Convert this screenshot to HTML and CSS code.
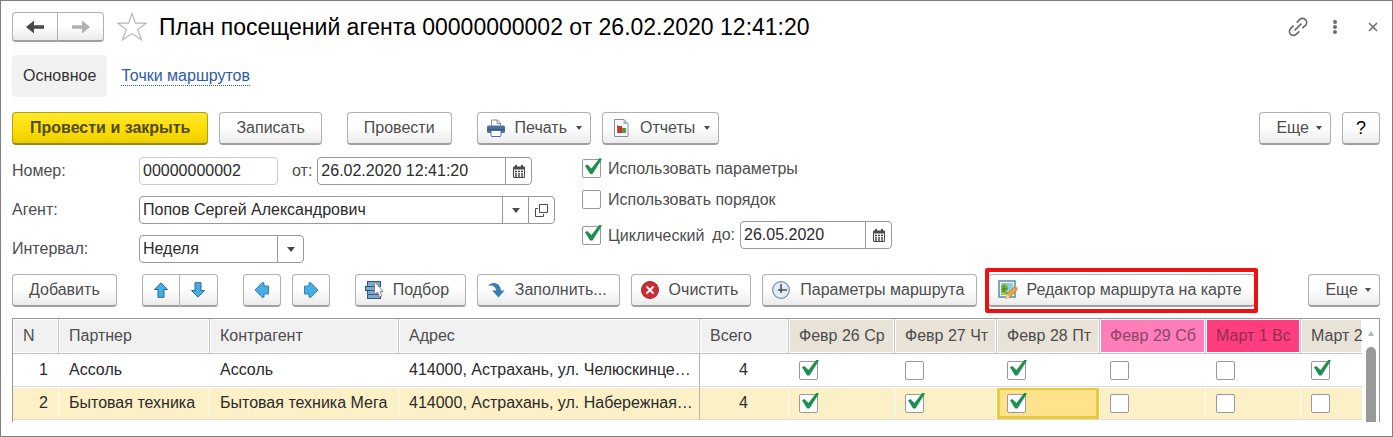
FILE: index.html
```
<!DOCTYPE html>
<html lang="ru">
<head>
  <meta charset="utf-8">
  <title>План посещений агента</title>
  <link rel="stylesheet" href="styles.css">
</head>
<body>
  <div class="window">
    <header class="header">
      <div class="btn-group nav">
        <button class="btn" aria-label="Назад">
          <svg width="18" height="14" viewBox="0 0 18 14"><path d="M0 7 L8 0.5 V5.3 H18 V8.700 H8 V13.5 Z" fill="#4a4a4a"/></svg>
        </button>
        <button class="btn" aria-label="Вперед">
          <svg width="18" height="14" viewBox="0 0 18 14"><path d="M18 7 L10 0.5 V5.3 H0 V8.700 H10 V13.5 Z" fill="#b0b0b0"/></svg>
        </button>
      </div>
      <button class="plain star" aria-label="В избранное">
        <svg width="30" height="30" viewBox="0 0 30 30"><path d="M15 1.5 L18.4 11.2 H29 L20.6 17.4 L24.6 28 L15 21.6 L5.4 28 L9.4 17.4 L1 11.2 H11.6 Z" fill="#fff" stroke="#b4b8bc" stroke-width="1.2"/></svg>
      </button>
      <h1>План посещений агента 00000000002 от 26.02.2020 12:41:20</h1>
      <div class="window-tools">
        <button class="plain" aria-label="Ссылка">
          <svg width="20" height="20" viewBox="0 0 20 20" fill="none" stroke="#6c6c6c" stroke-width="1.7"><path d="M8.8 5.6 L11.6 2.6 A4 4 0 0 1 17.4 8.4 L14.4 11.2 M11.2 14.4 L8.4 17.2 A4 4 0 0 1 2.6 11.6 L5.6 8.6 M6.6 13.4 L13.4 6.6"/></svg>
        </button>
        <button class="plain" aria-label="Меню">
          <svg width="6" height="14" viewBox="0 0 6 14" fill="#6c6c6c"><circle cx="3" cy="2" r="2"/><circle cx="3" cy="7" r="2"/><circle cx="3" cy="12" r="2"/></svg>
        </button>
        <button class="plain" aria-label="Закрыть">
          <svg width="10" height="10" viewBox="0 0 10 10" stroke="#6c6c6c" stroke-width="1.6"><path d="M1 1 L9 9 M9 1 L1 9"/></svg>
        </button>
      </div>
    </header>

    <nav class="tabs">
      <span class="tab-active">Основное</span>
      <a href="#">Точки маршрутов</a>
    </nav>

    <div class="toolbar">
      <button class="btn primary">Провести и закрыть</button>
      <button class="btn">Записать</button>
      <button class="btn apart">Провести</button>
      <button class="btn with-icon apart">
        <svg class="icon" width="18" height="18" viewBox="0 0 18 18"><path d="M4.5 8 V1 H10.5 L13.5 4 V8" fill="#fff" stroke="#7c8fa5"/><path d="M10 1 V4.5 H13.5" fill="none" stroke="#7c8fa5"/><rect y="6.500" width="18" height="7.500" rx="1.500" fill="#4d709c"/><path d="M0 10.500 H18" stroke="#2f4f78"/><rect x="4" y="11.500" width="10" height="6" rx="1" fill="#fff" stroke="#4d709c"/></svg>
        Печать
        <span class="caret"></span>
      </button>
      <button class="btn with-icon">
        <svg class="icon" width="18" height="18" viewBox="0 0 18 18"><path d="M2.500 0.500 H12 L16 4.500 V17.500 H2.500 Z" fill="#fff" stroke="#7f929c"/><path d="M11.500 0.500 V5 H16" fill="#a9b8c0"/><rect x="5" y="6" width="1" height="8" fill="#8b6e5a"/><rect x="6" y="7" width="4" height="7" fill="#d63232"/><rect x="10" y="9" width="4" height="5" fill="#4f9a3a"/></svg>
        Отчеты
        <span class="caret"></span>
      </button>
      <button class="btn more push">Еще <span class="caret"></span></button>
      <button class="btn square help">?</button>
    </div>

    <form class="form">
      <div class="fields">
        <div class="row">
          <label class="name" for="number">Номер:</label>
          <input class="box readonly" id="number" type="text" value="00000000002" readonly>
          <label class="from" for="date">от:</label>
          <div class="box combo date">
            <input id="date" type="text" value="26.02.2020 12:41:20">
            <button type="button" aria-label="Выбрать дату"><svg width="12" height="13" viewBox="0 0 12 13"><use href="#calendar"/></svg></button>
          </div>
        </div>
        <div class="row">
          <label class="name" for="agent">Агент:</label>
          <div class="box combo agent">
            <input id="agent" type="text" value="Попов Сергей Александрович">
            <button type="button" aria-label="Выбрать"><span class="caret"></span></button>
            <button type="button" aria-label="Открыть"><svg width="13" height="13" viewBox="0 0 13 13" fill="none" stroke="#4a4a4a"><path d="M4.500 0.500 H12.500 V8.500 H4.500 Z M3 4.500 H0.500 V12.500 H8.500 V10"/></svg></button>
          </div>
        </div>
        <div class="row">
          <label class="name" for="interval">Интервал:</label>
          <div class="box combo interval">
            <select id="interval"><option>Неделя</option></select>
            <span class="drop"><span class="caret"></span></span>
          </div>
        </div>
      </div>
      <div class="options">
        <label class="check"><input type="checkbox" checked>Использовать параметры</label>
        <label class="check"><input type="checkbox">Использовать порядок</label>
        <div class="row">
          <label class="check"><input type="checkbox" checked>Циклический</label>
          <label class="until" for="until">до:</label>
          <div class="box combo until-date">
            <input id="until" type="text" value="26.05.2020">
            <button type="button" aria-label="Выбрать дату"><svg width="12" height="13" viewBox="0 0 12 13"><use href="#calendar"/></svg></button>
          </div>
        </div>
      </div>
    </form>

    <div class="toolbar">
      <button class="btn">Добавить</button>
      <div class="btn-group move apart">
        <button class="btn" aria-label="Вверх"><svg width="16" height="16" viewBox="0 0 16 16"><use href="#arrow"/></svg></button>
        <button class="btn" aria-label="Вниз"><svg width="16" height="16" viewBox="0 0 16 16"><use href="#arrow" transform="rotate(180 8 8)"/></svg></button>
      </div>
      <button class="btn square apart" aria-label="Влево"><svg width="16" height="16" viewBox="0 0 16 16"><use href="#arrow-wide" transform="rotate(270 8 8)"/></svg></button>
      <button class="btn square" aria-label="Вправо"><svg width="16" height="16" viewBox="0 0 16 16"><use href="#arrow-wide" transform="rotate(90 8 8)"/></svg></button>
      <button class="btn with-icon apart">
        <svg class="icon" width="18" height="18" viewBox="0 0 18 18"><g fill="#7fa9cc" stroke="#2f5878"><rect x="2.500" y="0.500" width="13" height="5"/><rect x="2.500" y="9.500" width="13" height="4"/><rect x="2.500" y="13.500" width="13" height="4"/><rect x="0.500" y="5.500" width="13" height="4"/></g><path d="M9.500 0.500 V13.500 L12.500 11 L14.500 16 L17 15 L15 10.500 H18 Z" fill="#fff" stroke="#777" stroke-width="0.800"/></svg>
        Подбор
      </button>
      <button class="btn with-icon">
        <svg class="icon" width="18" height="18" viewBox="0 0 18 18"><path d="M1 4.500 C5 0 13.500 1.500 14 9.500 H17.500 L11.500 16.500 L5 9.500 H9 C9 6 6 4 1 4.500 Z" fill="#3b7db0"/></svg>
        Заполнить...
      </button>
      <button class="btn with-icon">
        <svg class="icon" width="18" height="18" viewBox="0 0 18 18"><circle cx="9" cy="9" r="8.500" fill="#cd2c35" stroke="#ad2029"/><path d="M5.500 5.500 L12.500 12.500 M12.500 5.500 L5.500 12.500" stroke="#fff" stroke-width="1.800"/></svg>
        Очистить
      </button>
      <button class="btn with-icon">
        <svg class="icon" width="18" height="18" viewBox="0 0 18 18"><circle cx="9" cy="9" r="8.300" fill="#e3ecf4" stroke="#6f8dab" stroke-width="1.200"/><path d="M9 3 V12 M6 9 H15" stroke="#4a4a4a" stroke-width="1.500"/></svg>
        Параметры маршрута
      </button>
      <div class="marked">
        <button class="btn with-icon">
          <svg class="icon" width="20" height="20" viewBox="0 0 20 20"><rect x="1" y="1" width="16" height="16" fill="#fff" stroke="#4b8fb5" stroke-width="1.500"/><rect x="3" y="3" width="12" height="12" fill="#8fcbe8"/><path d="M3 15 V6 L7 3 L10 7 L8 11 L12 15 Z" fill="#7db13a"/><path d="M6 6 V12 M4 9 H10" stroke="#4c7d2c"/><path d="M15 2 L15 9 M3 13 L9 15" stroke="#e9d47a"/><path d="M7.500 18.500 L9 14 L16 7 L19 10 L12 17 Z" fill="#efa33c" stroke="#bd7620" stroke-width="0.700"/><path d="M16 7 L17.300 5.800 L20 8.800 L19 10 Z" fill="#d58e8e"/><path d="M7.500 18.500 L9 14 L12 17 Z" fill="#f3dbb4"/></svg>
          Редактор маршрута на карте
        </button>
      </div>
      <button class="btn more push">Еще <span class="caret"></span></button>
    </div>

    <div class="grid">
      <div class="grid-body">
        <table>
          <colgroup>
            <col class="c-n"><col class="c-partner"><col class="c-contractor"><col><col class="c-total">
            <col class="c-wed"><col class="c-thu"><col class="c-fri"><col class="c-sat"><col class="c-sun"><col class="c-last">
          </colgroup>
          <thead>
            <tr>
              <th>N</th><th>Партнер</th><th>Контрагент</th><th>Адрес</th><th>Всего</th>
              <th class="day">Февр 26 Ср</th><th class="day">Февр 27 Чт</th><th class="day">Февр 28 Пт</th>
              <th class="day sat">Февр 29 Сб</th><th class="day sun">Март 1 Вс</th><th class="day">Март 2</th>
            </tr>
          </thead>
          <tbody>
            <tr>
              <td class="num">1</td><td>Ассоль</td><td>Ассоль</td><td class="fixed">414000, Астрахань, ул. Челюскинце…</td><td class="total">4</td>
              <td><input type="checkbox" aria-label="Февр 26" checked></td>
              <td><input type="checkbox" aria-label="Февр 27"></td>
              <td><input type="checkbox" aria-label="Февр 28" checked></td>
              <td><input type="checkbox" aria-label="Февр 29"></td>
              <td><input type="checkbox" aria-label="Март 1"></td>
              <td><input type="checkbox" aria-label="Март 2" checked></td>
            </tr>
            <tr class="selected">
              <td class="num">2</td><td>Бытовая техника</td><td>Бытовая техника Мега</td><td class="fixed">414000, Астрахань, ул. Набережная…</td><td class="total">4</td>
              <td><input type="checkbox" aria-label="Февр 26" checked></td>
              <td><input type="checkbox" aria-label="Февр 27" checked></td>
              <td class="current"><input type="checkbox" aria-label="Февр 28" checked></td>
              <td><input type="checkbox" aria-label="Февр 29"></td>
              <td><input type="checkbox" aria-label="Март 1"></td>
              <td><input type="checkbox" aria-label="Март 2"></td>
            </tr>
          </tbody>
        </table>
      </div>
      <div class="scrollbar">
        <span class="scroll-up"></span>
        <span class="thumb"></span>
      </div>
    </div>
  </div>

  <!-- shared icons -->
  <svg class="defs" width="0" height="0">
    <defs>
      <g id="calendar">
        <path d="M0 2.500 Q0 1.500 1 1.500 H2 V0 H4 V1.500 H8 V0 H10 V1.500 H11 Q12 1.500 12 2.500 V12 Q12 13 11 13 H1 Q0 13 0 12 Z" fill="#4a4a4a"/>
        <path d="M1 4.500 H11 V12 H1 Z" fill="#fff"/>
        <path d="M2 6.500 H10 M2 9 H10 M2 11 H10" stroke="#4a4a4a" stroke-width="1.500" stroke-dasharray="2 1"/>
      </g>
      <path id="arrow" d="M8 0.800 L14.500 7.500 H11 V15.300 H5 V7.500 H1.500 Z" fill="#45aee8" stroke="#2a6690"/>
      <path id="arrow-wide" d="M8 1 L15.200 8 V10 H12 V14.500 H4 V10 H0.800 V8 Z" fill="#45aee8" stroke="#3f7fa8"/>
    </defs>
  </svg>
</body>
</html>
```
FILE: styles.css
```
* {
  box-sizing: border-box;
}

body {
  margin: 0;
  font-family: "Liberation Sans", Arial, sans-serif;
  font-size: 16px;
  line-height: 20px;
  color: #4d4d4d;
  background: #fff;
}

button,
input,
select {
  font: inherit;
  color: inherit;
  margin: 0;
}

svg {
  display: block;
  flex: none;
}

.defs {
  position: absolute;
}

.window {
  display: flex;
  flex-direction: column;
  min-height: 100vh;
  padding: 11px 12px 14px 11px;
  border: 1px solid #7f7f7f;
}

/* header */
.header {
  display: flex;
  align-items: center;
  height: 30px;
}

h1 {
  margin: 0 0 0 12px;
  font-size: 23px;
  line-height: 26px;
  font-weight: normal;
  color: #000;
  white-space: nowrap;
}

.plain {
  display: flex;
  padding: 0;
  border: 0;
  background: none;
}

.star {
  margin-left: 13px;
}

.window-tools {
  display: flex;
  align-items: center;
  gap: 24px;
  margin-left: auto;
  padding-right: 2px;
}

.window-tools .plain:last-child {
  margin-left: 6px;
}

.tabs {
  display: flex;
  align-items: center;
  gap: 14px;
  margin-top: 13px;
}

.tab-active {
  padding: 11px;
  border-radius: 4px;
  background: #f1f1f1;
  color: #333;
}

.tabs a {
  color: #2e5aa8;
  text-decoration: none;
  line-height: 18px;
  border-bottom: 1px dotted #2e5aa8;
}

/* buttons */
.toolbar {
  display: flex;
  gap: 11px;
  margin-top: 15px;
}

.btn {
  display: flex;
  align-items: center;
  justify-content: center;
  height: 33px;
  padding: 0 16px;
  border: 1px solid #b0b0b0;
  border-bottom: 2px solid #a0a0a0;
  border-radius: 4px;
  background: linear-gradient(#fff 45%, #ebebeb);
  white-space: nowrap;
}

.primary {
  padding: 0 17px;
  border-color: #b5a014;
  border-bottom-color: #968620;
  background: linear-gradient(#ffe92e, #fbdc00 60%, #ebce00);
  font-weight: bold;
  color: #4f4a10;
}

.apart {
  margin-left: 14px;
}

.push {
  margin-left: auto;
}

.with-icon {
  justify-content: flex-start;
  min-width: 111px;
  padding: 0 12px 0 9px;
}

.with-icon .icon {
  margin-right: 10px;
}

.with-icon .caret {
  margin-left: 9px;
}

.with-icon:has(.caret),
.more {
  padding-right: 8px;
}

.more .caret {
  margin-left: 7px;
}

.square {
  width: 38px;
  padding: 0;
}

.help {
  font-size: 18px;
  color: #000;
}

.caret {
  border: 3px solid transparent;
  border-top: 4px solid #4a4a4a;
  border-bottom: 0;
}

.box .caret {
  border-width: 5px 4px 0;
}

.btn-group {
  display: flex;
}

.btn-group .btn {
  width: 38px;
  padding: 0;
}

.btn-group .btn:first-child {
  border-radius: 4px 0 0 4px;
}

.btn-group .btn:last-child {
  border-left: 0;
  border-radius: 0 4px 4px 0;
}

.nav .btn {
  width: 46px;
  height: 30px;
}

.marked {
  position: relative;
}

.marked .icon {
  margin-right: 8px;
}

.marked::after {
  content: "";
  position: absolute;
  inset: -6px -3px;
  border: 4px solid #ee1111;
  border-radius: 2px;
  pointer-events: none;
}

/* form */
.form {
  display: flex;
  gap: 27px;
  margin: 12px 0 -4px;
}

.fields {
  display: flex;
  flex-direction: column;
  gap: 11px;
}

.row {
  display: flex;
  align-items: center;
}

.name {
  width: 127px;
}

.box {
  height: 28px;
  border: 1px solid #999;
  border-radius: 4px;
  background: #fff;
  color: #2b2b2b;
}

.readonly {
  width: 139px;
  padding: 0 3px;
  border-color: #ccc;
}

.from {
  margin: 0 5px 0 14px;
}

.combo {
  display: flex;
  position: relative;
}

.combo input,
.combo select {
  flex: 1;
  min-width: 0;
  padding: 0 3px;
  border: 0;
  background: none;
  appearance: none;
  outline: 0;
}

.combo button,
.drop {
  display: flex;
  align-items: center;
  justify-content: center;
  width: 26px;
  padding: 0;
  border: 0;
  border-left: 1px solid #999;
  background: none;
}

.date {
  width: 215px;
}

.agent {
  width: 416px;
}

.interval {
  width: 165px;
}

.until-date {
  width: 152px;
}

.options {
  display: flex;
  flex-direction: column;
  gap: 12px;
  padding-top: 2px;
}

.check {
  display: flex;
  align-items: center;
  gap: 7px;
  line-height: 19px;
}

.until {
  margin: 0 5px 0 8px;
}

input[type="checkbox"] {
  display: block;
  position: relative;
  flex: none;
  width: 19px;
  height: 19px;
  appearance: none;
  border: 1px solid #999;
  border-radius: 2px;
  background: #fff;
}

input[type="checkbox"]:checked::after {
  content: "";
  position: absolute;
  left: 2px;
  top: -2px;
  width: 17px;
  height: 16px;
  background: #1b9150;
  clip-path: polygon(0 48%, 14% 40%, 38% 66%, 86% 0, 100% 6%, 44% 100%, 30% 100%);
}

/* table */
.grid {
  display: flex;
  margin-top: 11px;
  border: 1px solid #999;
  border-bottom: 0;
}

.grid-body {
  flex: 1;
  min-width: 0;
  overflow: hidden;
  padding-bottom: 2px;
}

table {
  width: 100%;
  table-layout: fixed;
  border-collapse: separate;
  border-spacing: 0;
}

th,
td {
  padding: 0 10px;
  overflow: hidden;
  text-align: left;
  white-space: nowrap;
}

th {
  height: 35px;
  border-right: 1px solid #c4c4c4;
  border-bottom: 1px solid #c4c4c4;
  background: #f1f1f1;
  box-shadow: inset 0 0 0 1px #fff;
  font-weight: normal;
}

td {
  height: 33px;
  border-right: 1px solid #fff;
  border-bottom: 1px solid #dcdcdc;
  box-shadow: inset 0 1px 0 #fff;
  color: #2b2b2b;
}

th:last-child,
td:last-child {
  padding-right: 0;
  border-right: 0;
}

.day {
  background: #e8e2d7;
}

.sat {
  background: #ff7db8;
  color: #8c4668;
}

.sun {
  background: #ff3d7f;
  color: #8f2f50;
}

.num {
  text-align: right;
}

.total {
  padding-right: 40px;
  text-align: right;
}

.fixed {
  border-right-color: #b4b4b4;
}

.selected td {
  background: #fcf0c6;
}

.selected .current {
  background: #ffe38c;
  box-shadow: inset 0 1px 0 #fff, inset 0 0 0 3px #efc935;
}

.c-n { width: 46px; }
.c-partner { width: 151px; }
.c-contractor { width: 189px; }
.c-total { width: 89px; }
.c-wed { width: 106px; }
.c-thu { width: 102px; }
.c-fri { width: 103px; }
.c-sat { width: 106px; }
.c-sun { width: 95px; }
.c-last { width: 61px; }

.scrollbar {
  display: flex;
  flex-direction: column;
  align-items: center;
  width: 17px;
  padding-top: 12px;
}

.scroll-up {
  border: 3px solid transparent;
  border-top: 0;
  border-bottom: 5px solid #b4b4b4;
}

.thumb {
  flex: 1;
  width: 10px;
  margin-top: 11px;
  border-radius: 5px 5px 0 0;
  background: #999;
}
```
